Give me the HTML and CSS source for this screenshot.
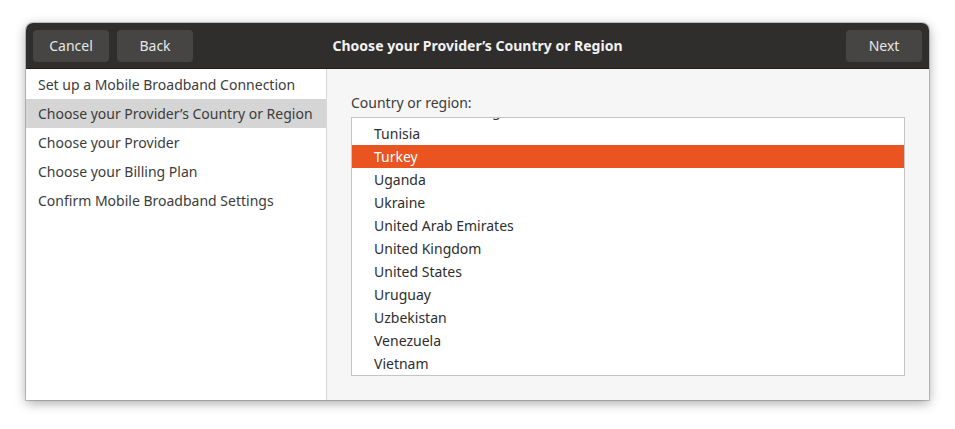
FILE: index.html
```
<!DOCTYPE html>
<html>
<head>
<meta charset="utf-8">
<link rel="stylesheet" href="styles.css">
</head>
<body>
<div class="window">
  <header class="headerbar">
    <div class="hb-left">
      <button class="btn">Cancel</button>
      <button class="btn">Back</button>
    </div>
    <div class="title">Choose your Provider’s Country or Region</div>
    <div class="hb-right">
      <button class="btn">Next</button>
    </div>
  </header>
  <div class="content">
    <nav class="sidebar">
      <div class="step">Set up a Mobile Broadband Connection</div>
      <div class="step active">Choose your Provider’s Country or Region</div>
      <div class="step">Choose your Provider</div>
      <div class="step">Choose your Billing Plan</div>
      <div class="step">Confirm Mobile Broadband Settings</div>
    </nav>
    <main class="page">
      <div class="label">Country or region:</div>
      <div class="listbox">
        <div class="list-inner">
          <div class="row">Trinidad and Tobago</div>
          <div class="row">Tunisia</div>
          <div class="row selected">Turkey</div>
          <div class="row">Uganda</div>
          <div class="row">Ukraine</div>
          <div class="row">United Arab Emirates</div>
          <div class="row">United Kingdom</div>
          <div class="row">United States</div>
          <div class="row">Uruguay</div>
          <div class="row">Uzbekistan</div>
          <div class="row">Venezuela</div>
          <div class="row">Vietnam</div>
        </div>
      </div>
    </main>
  </div>
</div>
</body>
</html>
```
FILE: styles.css
```
* { box-sizing: border-box; }
html, body { margin: 0; padding: 0; background: #ffffff; }
body {
  width: 955px;
  height: 429px;
  padding: 23px 26px 0 26px;
  font-family: "Noto Sans", "DejaVu Sans", sans-serif;
  font-size: 14px;
  color: #3c3c3c;
}
.window {
  width: 903px;
  height: 377px;
  display: flex;
  flex-direction: column;
  border-radius: 7px 7px 0 0;
  overflow: hidden;
  box-shadow: 0 3px 12px rgba(0,0,0,0.35), 0 0 0 1px rgba(0,0,0,0.18);
}
.headerbar {
  height: 46px;
  flex: none;
  background: #2f2e2d;
  border-bottom: 1px solid #1e1e1e;
  display: flex;
  align-items: center;
  padding: 0 7px;
  position: relative;
}
.hb-left { display: flex; gap: 8px; }
.hb-right { margin-left: auto; display: flex; }
.btn {
  width: 76px;
  height: 32px;
  border: none;
  border-radius: 4px;
  background: #474543;
  color: #e6e6e6;
  font-family: inherit;
  font-size: 14px;
  padding: 0;
}
.title {
  position: absolute;
  left: 0; right: 0;
  top: 0; bottom: 0;
  display: flex;
  align-items: center;
  justify-content: center;
  color: #f2f2f2;
  font-weight: bold;
  font-size: 14px;
  pointer-events: none;
}
.content {
  flex: 1;
  display: flex;
  min-height: 0;
}
.sidebar {
  width: 301px;
  flex: none;
  background: #ffffff;
  border-right: 1px solid #d6d6d6;
  padding-top: 1px;
}
.step {
  height: 29px;
  line-height: 29px;
  padding-left: 12px;
  white-space: nowrap;
}
.step.active { background: #d5d5d5; }
.page {
  flex: 1;
  background: #f6f6f6;
  padding: 25px 24px 0 24px;
}
.label {
  height: 23px;
  line-height: 18px;
}
.listbox {
  width: 554px;
  height: 259px;
  border: 1px solid #c4c4c4;
  background: #ffffff;
  overflow: hidden;
}
.list-inner { margin-top: -19px; }
.row {
  height: 23px;
  line-height: 23px;
  padding-left: 22px;
  color: #2e2e2e;
}
.row.selected { background: #e95420; color: #ffffff; }
```
